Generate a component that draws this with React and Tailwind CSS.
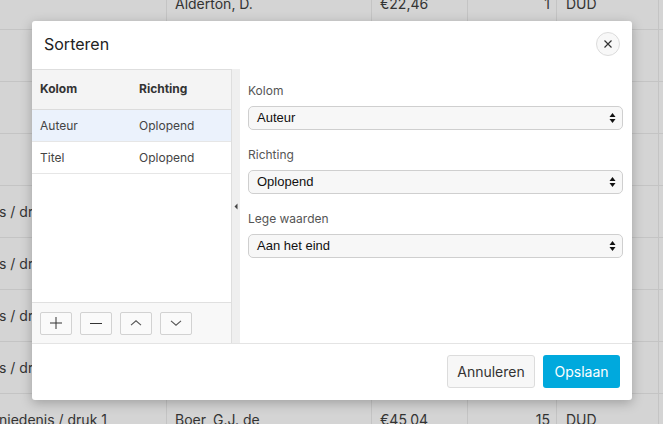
import React from "react";

const rows = [
  { a: "", b: "Alderton, D.", c: "€22,46", d: "1", e: "DUD" },
  { a: "", b: "", c: "", d: "", e: "" },
  { a: "", b: "", c: "", d: "", e: "" },
  { a: "", b: "", c: "", d: "", e: "" },
  { a: "s / druk 2", b: "", c: "", d: "", e: "" },
  { a: "s / druk 1", b: "", c: "", d: "", e: "" },
  { a: "s / druk 3", b: "", c: "", d: "", e: "" },
  { a: "s / druk 1", b: "", c: "", d: "", e: "" },
  { a: "niedenis / druk 1", b: "Boer, G.J. de", c: "€45,04", d: "15", e: "DUD" },
];

function BackgroundTable() {
  return (
    <div className="-mt-[22px] text-[14px] text-[#333]" style={{ fontFamily: "Inter, 'Noto Sans', sans-serif" }}>
      {rows.map((r, i) => (
        <div key={i} className="flex h-[52px] border-b border-[#c4c4c4]">
          <div className="w-[167px] shrink-0 overflow-hidden whitespace-nowrap flex items-center border-r border-[#c4c4c4]">
            <span className="-ml-[1px]">{r.a}</span>
          </div>
          <div className="w-[205px] shrink-0 flex items-center pl-2 border-r border-[#c4c4c4]">{r.b}</div>
          <div className="w-[96px] shrink-0 flex items-center pl-2 border-r border-[#c4c4c4]">{r.c}</div>
          <div className="w-[89px] shrink-0 flex items-center justify-end pr-[6px] border-r border-[#c4c4c4]">{r.d}</div>
          <div className="w-[102px] shrink-0 flex items-center pl-[9px] border-r border-[#c4c4c4]">{r.e}</div>
          <div className="flex-1" />
        </div>
      ))}
    </div>
  );
}

function UpDown() {
  return (
    <svg width="7" height="11" viewBox="0 0 7 11" className="absolute right-[6px] top-1/2 -translate-y-1/2">
      <path d="M3.5 0.5 L6.5 4.5 L0.5 4.5 Z" fill="#111" />
      <path d="M3.5 10.5 L6.5 6.5 L0.5 6.5 Z" fill="#111" />
    </svg>
  );
}

function Field({ label, value }) {
  return (
    <div className="flex flex-col">
      <div className="text-[12px] text-[#555] h-[14px] leading-[14px] mb-[8px]">{label}</div>
      <div className="relative h-[24px] rounded-[5px] border border-[#cfcfcf] bg-[#f7f7f7] flex items-center pl-[8px] text-[13px] text-[#111]" style={{ fontFamily: "'Liberation Sans', Arial, sans-serif" }}>
        {value}
        <UpDown />
      </div>
    </div>
  );
}

function ToolButton({ children }) {
  return (
    <button className="w-[32px] h-[23px] rounded-[2px] border border-[#d2d2d2] bg-[#fafafa] flex items-center justify-center">
      {children}
    </button>
  );
}

export default function App() {
  return (
    <div className="relative w-[663px] h-[424px] overflow-hidden bg-[#d4d4d4]">
      <BackgroundTable />

      <div
        className="absolute left-[32px] top-[21px] w-[600px] h-[379px] bg-white rounded-[3px] shadow-[0_3px_12px_rgba(0,0,0,0.25)] flex flex-col overflow-hidden"
        style={{ fontFamily: "Inter, 'Noto Sans', sans-serif" }}
      >
        {/* header */}
        <div className="h-[48px] shrink-0 flex items-center justify-between pl-[12px] pr-[12px] pb-[2px]">
          <div className="text-[16px] text-[#222]">Sorteren</div>
          <button className="w-[24px] h-[24px] rounded-full border border-[#dcdcdc] bg-[#f8f8f8] flex items-center justify-center">
            <svg width="10" height="10" viewBox="0 0 10 10">
              <path d="M1.5 1.5 L8.5 8.5 M8.5 1.5 L1.5 8.5" stroke="#333" strokeWidth="1.2" />
            </svg>
          </button>
        </div>

        {/* body */}
        <div className="flex-1 flex min-h-0">
          <div className="w-[200px] shrink-0 flex flex-col border-t border-r border-[#dedede]">
            <div className="h-[40px] shrink-0 flex items-center pb-[2px] bg-[#f4f4f4] border-b border-[#dcdcdc] text-[12px] font-bold text-[#333]">
              <div className="w-[107px] pl-[8px]">Kolom</div>
              <div>Richting</div>
            </div>
            <div className="h-[32px] shrink-0 flex items-center bg-[#ebf2fc] border-b border-[#e6e6e6] text-[12px] text-[#444]">
              <div className="w-[107px] pl-[8px]">Auteur</div>
              <div>Oplopend</div>
            </div>
            <div className="h-[32px] shrink-0 flex items-center border-b border-[#e6e6e6] text-[12px] text-[#444]">
              <div className="w-[107px] pl-[8px]">Titel</div>
              <div>Oplopend</div>
            </div>
            <div className="flex-1" />
            <div className="h-[41px] shrink-0 bg-[#f8f8f8] border-t border-[#e0e0e0] flex items-center gap-[8px] pl-[8px]">
              <ToolButton>
                <svg width="14" height="14" viewBox="0 0 14 14">
                  <path d="M7 1 V13 M1 7 H13" stroke="#333" strokeWidth="1" />
                </svg>
              </ToolButton>
              <ToolButton>
                <svg width="14" height="14" viewBox="0 0 14 14">
                  <path d="M1 7.5 H13" stroke="#333" strokeWidth="1" />
                </svg>
              </ToolButton>
              <ToolButton>
                <svg width="12" height="6" viewBox="0 0 12 6">
                  <path d="M1 5.2 L6 0.8 L11 5.2" stroke="#555" strokeWidth="1.1" fill="none" />
                </svg>
              </ToolButton>
              <ToolButton>
                <svg width="12" height="6" viewBox="0 0 12 6">
                  <path d="M1 0.8 L6 5.2 L11 0.8" stroke="#555" strokeWidth="1.1" fill="none" />
                </svg>
              </ToolButton>
            </div>
          </div>

          {/* splitter */}
          <div className="w-[8px] shrink-0 bg-[#efefef] flex items-center justify-center">
            <svg width="4" height="7" viewBox="0 0 4 7">
              <path d="M3.5 0.5 L0.5 3.5 L3.5 6.5 Z" fill="#444" />
            </svg>
          </div>

          <div className="flex-1 flex flex-col gap-[18px] pt-[15px] pl-[8px] pr-[9px]">
            <Field label="Kolom" value="Auteur" />
            <Field label="Richting" value="Oplopend" />
            <Field label="Lege waarden" value="Aan het eind" />
          </div>
        </div>

        {/* footer */}
        <div className="h-[57px] shrink-0 border-t border-[#e4e4e4] flex items-center justify-end gap-[8px] pr-[12px] pb-[2px]">
          <button className="w-[88px] h-[33px] rounded-[3px] border border-[#dcdcdc] bg-[#f7f7f7] text-[14px] text-[#333]">
            Annuleren
          </button>
          <button className="w-[77px] h-[33px] rounded-[3px] bg-[#00a9dd] text-[14px] text-white">
            Opslaan
          </button>
        </div>
      </div>
    </div>
  );
}
